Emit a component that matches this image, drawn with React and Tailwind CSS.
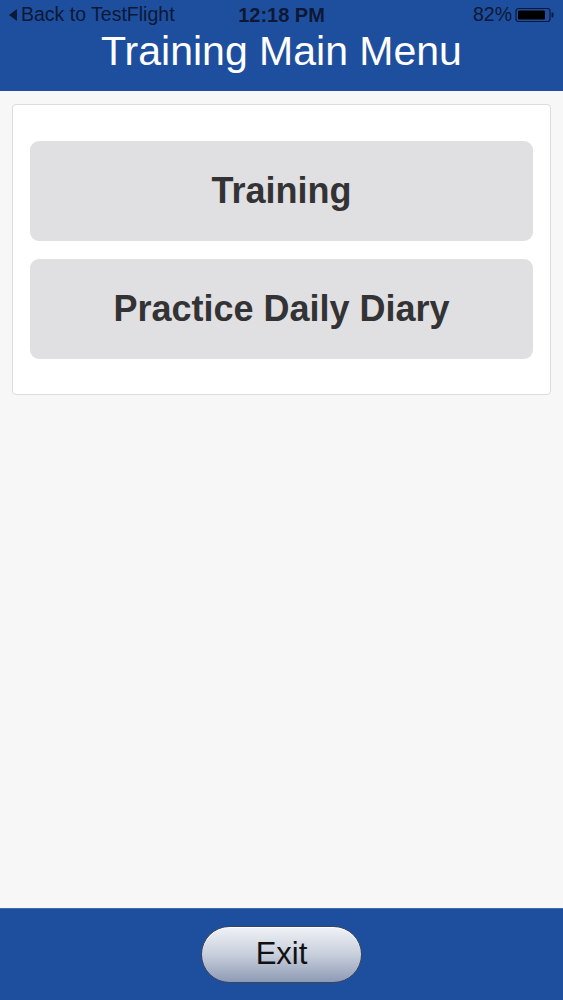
export default function App() {
  return (
    <div className="flex min-h-screen flex-col bg-[#f8f7f8]" style={{ fontFamily: '"Liberation Sans", Arial, sans-serif' }}>
      <header className="h-[91px] bg-[#1e4f9e]">
        <div className="relative flex h-[30px] items-center px-[8px] text-[19.5px] text-[#0c1836]">
          <div className="flex items-center gap-[3px]">
            <svg width="10" height="14" viewBox="0 0 10 14">
              <path d="M9 1 L1 7 L9 13 Z" fill="#0c1836" />
            </svg>
            <span>Back to TestFlight</span>
          </div>
          <span className="absolute left-1/2 -translate-x-1/2 text-[20px] font-bold">12:18 PM</span>
          <div className="ml-auto flex items-center gap-[3px]">
            <span>82%</span>
            <svg width="40" height="16" viewBox="0 0 40 16">
              <rect x="1" y="1.5" width="34" height="13" rx="2.5" fill="none" stroke="#0c1836" strokeWidth="1.2" />
              <rect x="3" y="3.5" width="27" height="9" rx="1" fill="#000" />
              <rect x="36.5" y="5.5" width="2" height="5" rx="1" fill="#0c1836" />
            </svg>
          </div>
        </div>
        <h1 className="text-center text-[41px] leading-[42px] text-white">Training Main Menu</h1>
      </header>

      <main className="flex-1 px-[12px] pt-[13px]">
        <div className="flex flex-col gap-[18px] rounded-[4px] border border-[#dcdcdc] bg-white px-[17px] pb-[35px] pt-[36px]">
          {['Training', 'Practice Daily Diary'].map((label) => (
            <button
              key={label}
              className="flex h-[100px] items-center justify-center rounded-[9px] bg-[#e0dfe1] text-[36px] font-bold text-[#333335]"
            >
              {label}
            </button>
          ))}
        </div>
      </main>

      <footer className="flex h-[92px] items-center justify-center border-t border-[#3d6bb0] bg-[#1e4f9e]">
        <button className="flex h-[57px] w-[161px] items-center justify-center rounded-full border border-[#3a4660] bg-gradient-to-b from-[#f0f2f6] via-[#c8cfdc] to-[#8e9bb5] text-[31px] text-[#111] shadow-[inset_0_1px_0_rgba(255,255,255,0.8)]">
          Exit
        </button>
      </footer>
    </div>
  );
}
